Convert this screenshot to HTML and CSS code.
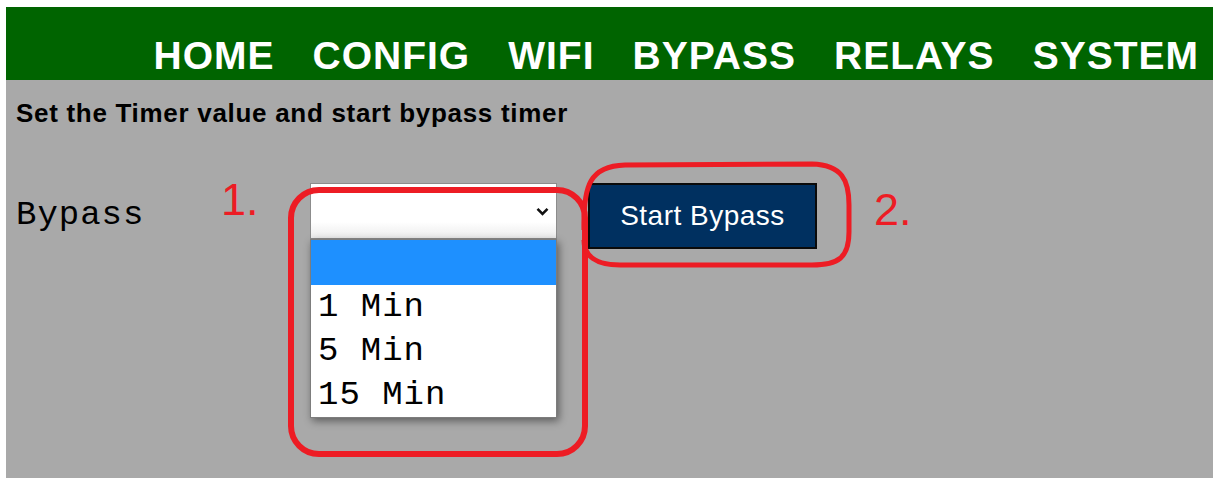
FILE: index.html
```html
<!DOCTYPE html>
<html lang="en">
<head>
<meta charset="utf-8">
<title>Bypass</title>
<link rel="stylesheet" href="styles.css">
</head>
<body>
<div class="page">
  <header class="topbar">
    <nav class="menu">
      <a class="menu-link" href="#">HOME</a>
      <a class="menu-link" href="#">CONFIG</a>
      <a class="menu-link" href="#">WIFI</a>
      <a class="menu-link" href="#">BYPASS</a>
      <a class="menu-link" href="#">RELAYS</a>
      <a class="menu-link" href="#">SYSTEM</a>
    </nav>
  </header>
  <main class="content">
    <h3 class="intro">Set the Timer value and start bypass timer</h3>
    <div class="form-row">
      <label class="field-label">Bypass</label>
      <div class="picker">
        <div class="picker-box">
          <svg class="chevron" width="13" height="9" viewBox="0 0 13 9"><path d="M1.5 1.8 L6.5 6.8 L11.5 1.8" fill="none" stroke="#111" stroke-width="2.6"/></svg>
        </div>
        <ul class="picker-list">
          <li class="picker-option is-active">&nbsp;</li>
          <li class="picker-option">1 Min</li>
          <li class="picker-option">5 Min</li>
          <li class="picker-option">15 Min</li>
        </ul>
      </div>
      <button class="start-btn" type="button">Start Bypass</button>
    </div>
  </main>
  <svg class="marks" width="1213" height="479" viewBox="0 0 1213 479">
    <rect x="291" y="190" width="294" height="264" rx="28" ry="28" fill="none" stroke="#ed1c24" stroke-width="6"/>
    <path d="M584 230 C583 185 590 166 625 165 L812 164 C842 165 849 180 849 205 L849 232 C849 258 838 265 812 265 L620 265 C596 265 584 256 584 240" fill="none" stroke="#ed1c24" stroke-width="5"/>
    <text class="mark-num" x="221" y="215">1.</text>
    <text class="mark-num" x="874" y="225">2.</text>
  </svg>
</div>
</body>
</html>
```

FILE: styles.css
```css
html, body {
  margin: 0;
  padding: 0;
  background: #ffffff;
}

.page {
  position: relative;
  width: 1213px;
  height: 479px;
  padding: 7px 0 0 6px;
  box-sizing: border-box;
  overflow: hidden;
  font-family: "Liberation Sans", Arial, sans-serif;
}

.topbar {
  background: #006400;
  height: 73px;
  box-sizing: border-box;
  padding: 31px 14px 0 0;
}

.menu {
  display: flex;
  justify-content: flex-end;
  gap: 38px;
}

.menu-link {
  color: #ffffff;
  text-decoration: none;
  font-weight: bold;
  font-size: 39px;
  line-height: 36px;
  letter-spacing: 1px;
}

.content {
  background: #a9a9a9;
  height: 398px;
  box-sizing: border-box;
  padding: 18px 0 0 10px;
}

.intro {
  margin: 0;
  font-size: 26px;
  line-height: 30px;
  font-weight: bold;
  letter-spacing: 0.7px;
  color: #000;
}

.form-row {
  display: flex;
  align-items: flex-start;
  margin-top: 55px;
}

.field-label {
  width: 294px;
  font-family: "Liberation Mono", "Courier New", monospace;
  font-size: 34px;
  line-height: 56px;
  padding-top: 4px;
  letter-spacing: 1px;
  color: #000;
}

.picker {
  position: relative;
  width: 247px;
}

.picker-box {
  height: 56px;
  box-sizing: border-box;
  border: 1px solid #8c8c8c;
  background: linear-gradient(#ffffff 70%, #ececec);
  display: flex;
  align-items: center;
  justify-content: flex-end;
  padding-right: 7px;
}

.chevron {
  display: block;
}

.picker-list {
  position: absolute;
  left: 0;
  top: 56px;
  width: 247px;
  box-sizing: border-box;
  margin: 0;
  padding: 0;
  list-style: none;
  background: #ffffff;
  border: 1px solid #7d7d7d;
  box-shadow: 2px 3px 8px rgba(0, 0, 0, 0.45);
}

.picker-option {
  height: 44px;
  line-height: 44px;
  padding-left: 7px;
  font-family: "Liberation Mono", "Courier New", monospace;
  font-size: 34px;
  letter-spacing: 1px;
  color: #000;
}

.picker-option.is-active {
  background: #1e90ff;
  height: 45px;
}

.start-btn {
  margin-left: 31px;
  width: 229px;
  height: 66px;
  background: #003060;
  border: 2px solid #0a0a0a;
  color: #ffffff;
  font-family: "Liberation Sans", Arial, sans-serif;
  font-size: 28px;
  letter-spacing: 0.5px;
  padding: 0;
}

.marks {
  position: absolute;
  left: 0;
  top: 0;
  pointer-events: none;
}

.mark-num {
  fill: #ed1c24;
  font-family: "Liberation Sans", Arial, sans-serif;
  font-size: 45px;
}
```
